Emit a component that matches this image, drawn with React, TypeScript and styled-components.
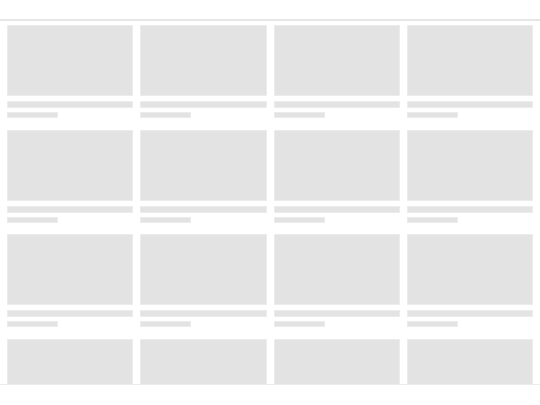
import React from 'react'
import styled, { createGlobalStyle } from 'styled-components'

const GlobalStyle = createGlobalStyle`
  html, body {
    margin: 0;
    padding: 0;
    background: #ffffff;
    font-family: "Liberation Sans", Arial, sans-serif;
  }
`

const Page = styled.div`
  width: 540px;
  height: 405px;
  display: flex;
  flex-direction: column;
  background: #fff;
`

const Header = styled.div`
  height: 19px;
  flex-shrink: 0;
`

const Feed = styled.div`
  height: 366px;
  flex-shrink: 0;
  box-sizing: border-box;
  border-top: 2px solid #e6e6e6;
  border-bottom: 1px solid #ececec;
  overflow: hidden;
  padding: 4px 7px 0;
`

const Grid = styled.div`
  display: grid;
  grid-template-columns: repeat(4, 1fr);
  column-gap: 7px;
  row-gap: 11.6px;
`

const Card = styled.div`
  display: flex;
  flex-direction: column;
`

const Block = styled.div`
  box-sizing: border-box;
  background: #e3e3e3;
  border: 1px solid #ececec;
`

const Thumb = styled(Block)`
  aspect-ratio: 16 / 9;
  width: 100%;
`

const Line = styled(Block)<{ $width?: string; $height: number; $top: number }>`
  width: ${(p) => p.$width ?? '100%'};
  height: ${(p) => p.$height}px;
  margin-top: ${(p) => p.$top}px;
`

const cards = Array.from({ length: 16 }, (_, i) => i)

export default function App() {
  return (
    <>
      <GlobalStyle />
      <Page>
        <Header />
        <Feed>
          <Grid>
            {cards.map((i) => (
              <Card key={i}>
                <Thumb />
                <Line $top={5} $height={7} />
                <Line $top={4} $height={6} $width="51px" />
              </Card>
            ))}
          </Grid>
        </Feed>
      </Page>
    </>
  )
}
